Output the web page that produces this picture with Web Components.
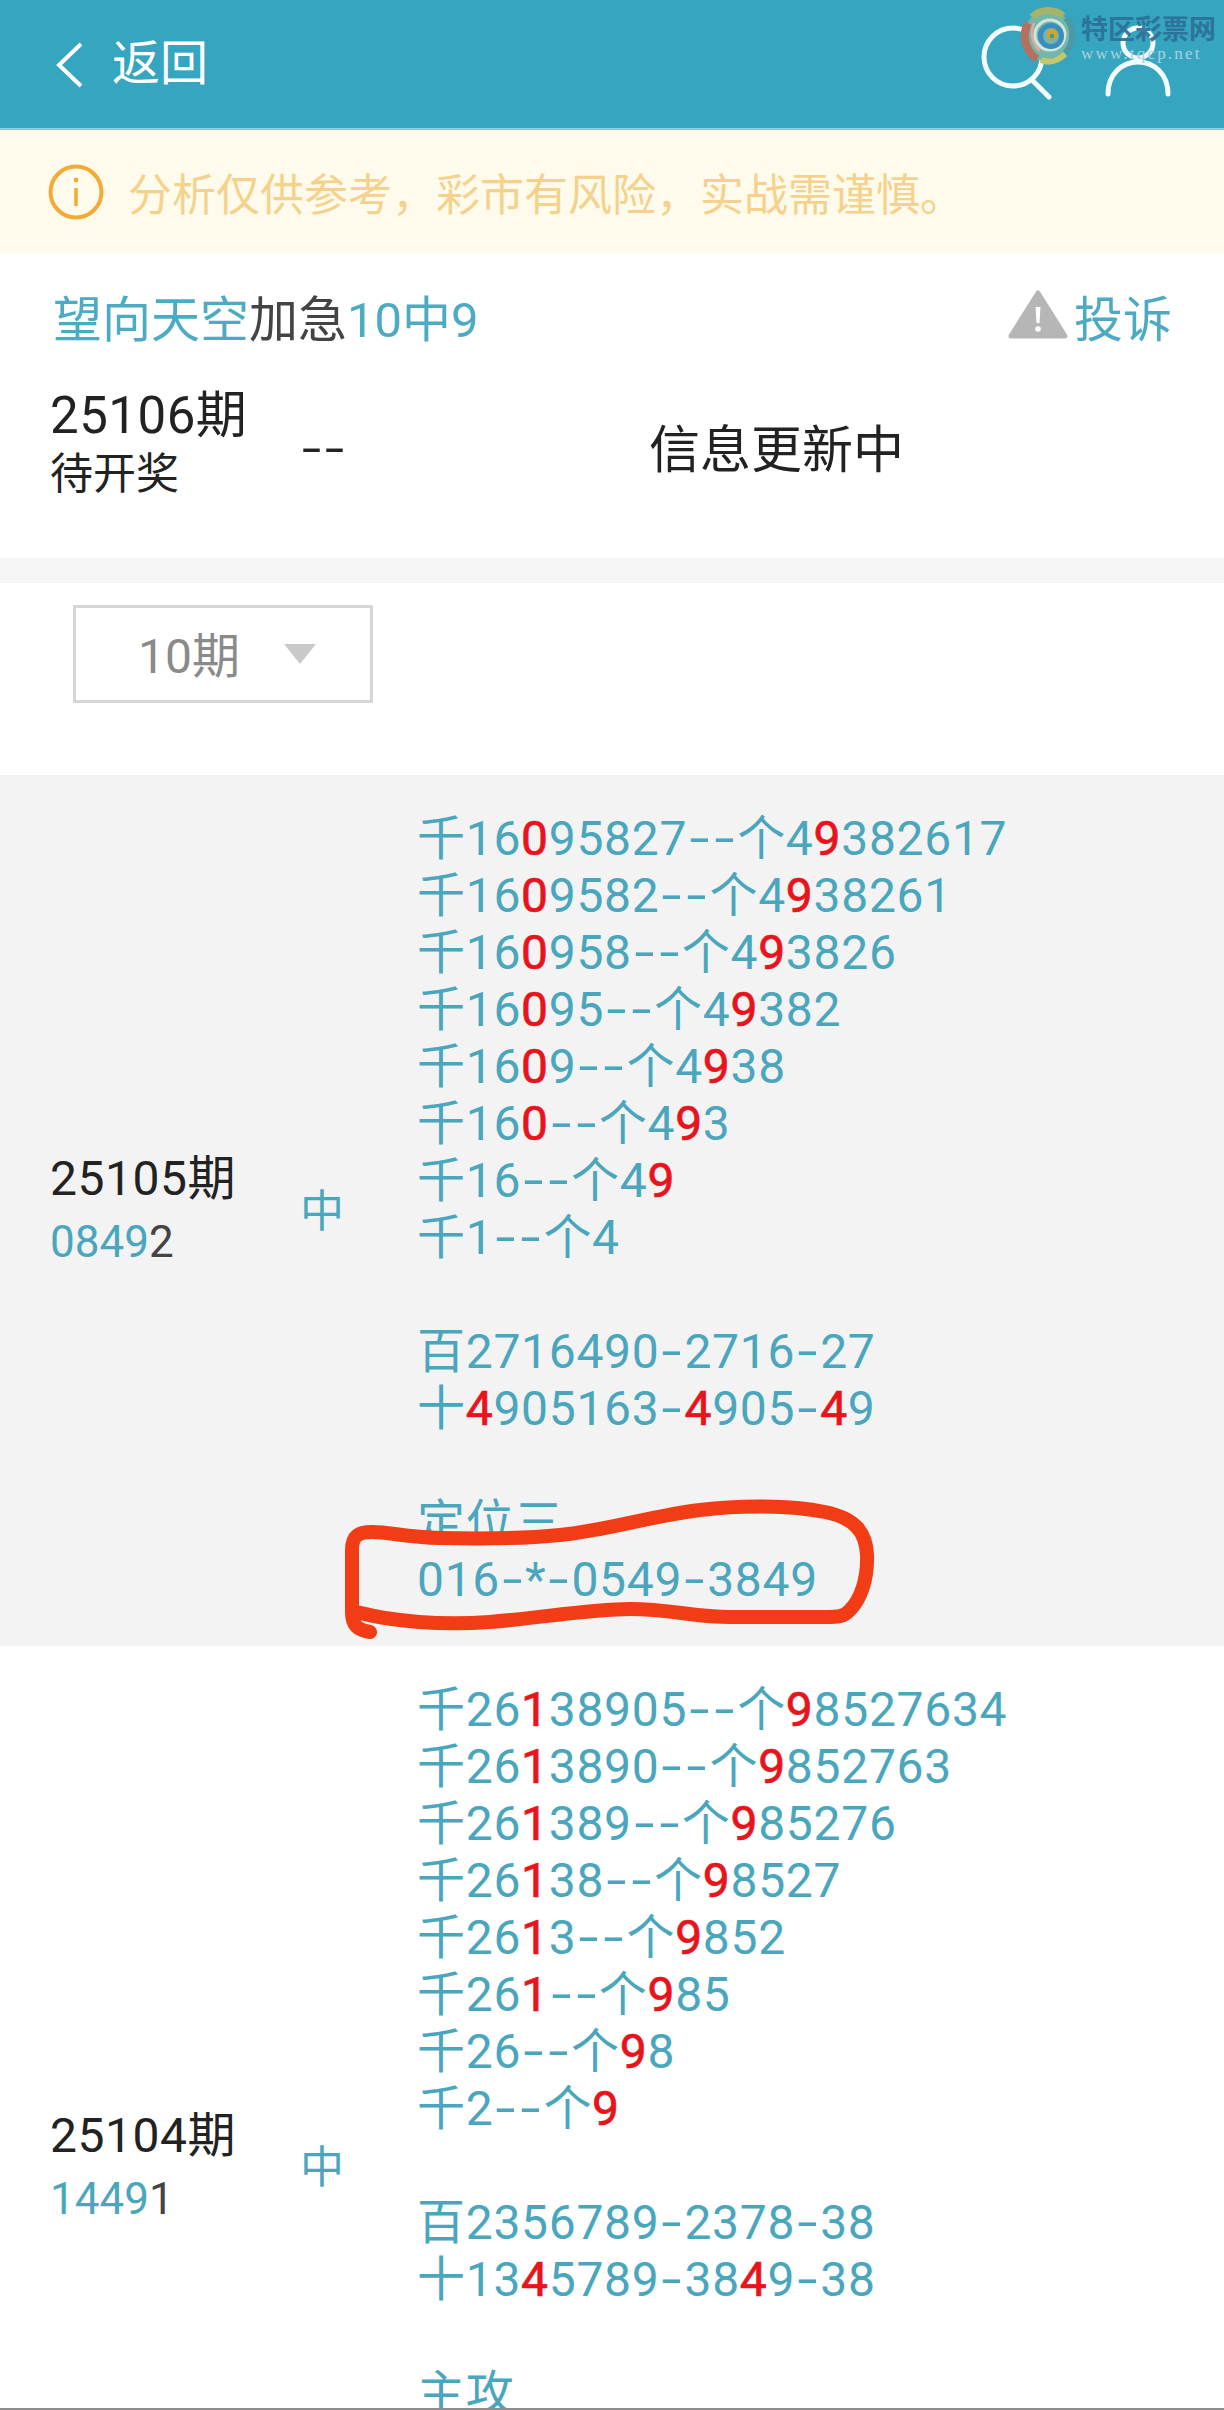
<!DOCTYPE html>
<html lang="zh">
<head>
<meta charset="utf-8">
<title>返回</title>
<style>
html, body { margin: 0; height: 2410px; overflow: hidden; background: #fff; }
body { font-family: Roboto, "Noto Sans CJK SC", sans-serif; color: #222; position: relative; }
</style>
</head>
<body>
<top-bar></top-bar>
<notice-bar>分析仅供参考，彩市有风险，实战需谨慎。</notice-bar>
<info-card></info-card>
<period-filter>10期</period-filter>

<result-row period="25105期" code="0849" tail="2" shade>
  <num-line text="千16[0]95827--个4[9]382617"></num-line>
  <num-line text="千16[0]9582--个4[9]38261"></num-line>
  <num-line text="千16[0]958--个4[9]3826"></num-line>
  <num-line text="千16[0]95--个4[9]382"></num-line>
  <num-line text="千16[0]9--个4[9]38"></num-line>
  <num-line text="千16[0]--个4[9]3"></num-line>
  <num-line text="千16--个4[9]"></num-line>
  <num-line text="千1--个4"></num-line>
  <num-line></num-line>
  <num-line text="百2716490-2716-27"></num-line>
  <num-line text="十[4]905163-[4]905-[4]9"></num-line>
  <num-line></num-line>
  <num-line text="定位三"></num-line>
  <num-line text="016-*-0549-3849"></num-line>
  <scribble-mark></scribble-mark>
</result-row>

<result-row period="25104期" code="1449" tail="1">
  <num-line text="千26[1]38905--个[9]8527634"></num-line>
  <num-line text="千26[1]3890--个[9]852763"></num-line>
  <num-line text="千26[1]389--个[9]85276"></num-line>
  <num-line text="千26[1]38--个[9]8527"></num-line>
  <num-line text="千26[1]3--个[9]852"></num-line>
  <num-line text="千26[1]--个[9]85"></num-line>
  <num-line text="千26--个[9]8"></num-line>
  <num-line text="千2--个[9]"></num-line>
  <num-line></num-line>
  <num-line text="百2356789-2378-38"></num-line>
  <num-line text="十13[4]5789-38[4]9-38"></num-line>
  <num-line></num-line>
  <num-line text="主攻"></num-line>
  <num-line></num-line>
  <num-line></num-line>
  <num-line></num-line>
  <num-line></num-line>
</result-row>

<bottom-edge></bottom-edge>

<script>
//Barra superior
class TopBar extends HTMLElement {
    connectedCallback() {
        const shadowRoot = this.attachShadow({ mode: 'open' });
        shadowRoot.innerHTML = `
            <style>
                :host {
                    display: flex;
                    align-items: center;
                    position: relative;
                    height: 128px;
                    border-bottom: 2px solid #8fcbd9;
                    background: #36a5c0;
                    color: #fff;
                }
                .back { margin: 2px 0 0 56px; display: block; }
                .title { margin-left: 28px; font-size: 48px; line-height: 60px; }
                .icons { margin-left: auto; margin: 0 52px 4px auto; display: flex; gap: 48px; align-items: center; }
                .icons svg { display: block; }
                .mark { position: absolute; left: 1021px; top: 6px; display: flex; gap: 6px; }
                .brand { margin-top: 9px; }
                .brand b { display: block; font-size: 27px; line-height: 30px; color: #2c7097; opacity: .92; white-space: nowrap; }
                .brand i {
                    display: block;
                    font: 17px/18px "Liberation Serif", serif;
                    letter-spacing: 2.2px;
                    color: #a9d2dc;
                    white-space: nowrap;
                }
            </style>
            <svg class="back" width="28" height="46" viewBox="0 0 28 46" fill="none" stroke="#fff" stroke-width="4">
                <path d="M25 2 3 23l22 21"/>
            </svg>
            <span class="title">返回</span>
            <div class="icons">
                <svg width="76" height="76" viewBox="0 0 76 76" fill="none" stroke="#f2fbfd" stroke-width="5" stroke-linecap="round">
                    <circle cx="33" cy="33" r="29"/>
                    <path d="M52 56 69 73"/>
                </svg>
                <svg width="68" height="76" viewBox="0 0 68 76" fill="none" stroke="#f2fbfd" stroke-width="5" stroke-linecap="round">
                    <circle cx="34" cy="19" r="15"/>
                    <path d="M4 70C4 50 18 38 34 38S64 50 64 70"/>
                </svg>
            </div>
            <div class="mark">
                <svg width="54" height="60" viewBox="0 0 54 60" fill="none">
                    <ellipse cx="27" cy="30" rx="24" ry="26" fill="#74b6aa"/>
                    <path d="M7 17C1 28 3 44 16 53" stroke="#b5705f" stroke-width="8"/>
                    <path d="M13 17C9 27 11 38 19 45" stroke="#e3a9a0" stroke-width="2.5"/>
                    <path d="M11 11C19 3 33 2 42 10" stroke="#a5b468" stroke-width="7"/>
                    <path d="M45 12C54 22 53 38 44 47" stroke="#4a9aa6" stroke-width="6"/>
                    <path d="M20 54C29 58 38 54 44 48" stroke="#c6c868" stroke-width="6"/>
                    <circle cx="29" cy="29" r="15" stroke="#cfe6d8" stroke-width="3"/>
                    <circle cx="30" cy="30" r="10.5" stroke="#3a8dc0" stroke-width="5"/>
                    <circle cx="31" cy="28" r="5.5" fill="#cfa436"/>
                    <circle cx="31" cy="30" r="2.2" fill="#3f9a86"/>
                </svg>
                <div class="brand">
                    <b>特区彩票网</b>
                    <i>www.tqcp.net</i>
                </div>
            </div>
        `;
    }
}
customElements.define("top-bar", TopBar);

//Aviso
class NoticeBar extends HTMLElement {
    connectedCallback() {
        const shadowRoot = this.attachShadow({ mode: 'open' });
        shadowRoot.innerHTML = `
            <style>
                :host {
                    display: flex;
                    align-items: center;
                    gap: 24px;
                    height: 123px;
                    padding: 0 0 0 48px;
                    background: #fffbec;
                    color: #f4d28c;
                    font-size: 44px;
                }
                svg { display: block; flex: none; }
            </style>
            <svg width="56" height="56" viewBox="0 0 56 56" fill="none" stroke="#f2ab35">
                <circle cx="28" cy="28" r="25.5" stroke-width="4"/>
                <circle cx="28" cy="16" r="2.4" fill="#f2ab35" stroke="none"/>
                <path d="M28 24V42" stroke-width="3.5"/>
            </svg>
            <span><slot></slot></span>
        `;
    }
}
customElements.define("notice-bar", NoticeBar);

//Tarjeta de informacion
class InfoCard extends HTMLElement {
    connectedCallback() {
        const shadowRoot = this.attachShadow({ mode: 'open' });
        shadowRoot.innerHTML = `
            <style>
                :host {
                    display: block;
                    box-sizing: border-box;
                    height: 330px;
                    padding: 37px 52px 0 53px;
                    border-bottom: 25px solid #f5f5f5;
                    background: #fff;
                }
                .head { display: flex; align-items: center; justify-content: space-between; height: 50px; font-size: 49px; }
                .teal { color: #4cabc2; }
                .dark { color: #444; }
                .report { display: flex; align-items: center; gap: 6px; }
                .report svg { display: block; }
                .draw { display: flex; align-items: center; margin: 46px 0 0 -3px; color: #222; }
                .when { width: 250px; }
                .when div:first-child { font-size: 51px; line-height: 60px; letter-spacing: .5px; }
                .when div:last-child { font-size: 43px; line-height: 56px; }
                .none { width: 349px; font-size: 46px; margin-top: 8px; }
                .none i { display: inline-block; width: 23px; text-align: center; font-style: normal; transform: scaleX(1.5); }
                .state { font-size: 51px; margin-top: 4px; }
            </style>
            <div class="head">
                <div><span class="teal">望向天空</span><span class="dark">加急</span><span class="teal">10中9</span></div>
                <div class="report teal">
                    <svg width="60" height="50" viewBox="0 0 60 50">
                        <path d="M30 3 57 46H3Z" fill="#b6b6b6" stroke="#b6b6b6" stroke-width="5" stroke-linejoin="round"/>
                        <path d="M27.5 17h5l-1 16h-3Z" fill="#fff"/>
                        <circle cx="30" cy="39" r="2.8" fill="#fff"/>
                    </svg>
                    <span>投诉</span>
                </div>
            </div>
            <div class="draw">
                <div class="when"><div>25106期</div><div>待开奖</div></div>
                <div class="none"><i>-</i><i>-</i></div>
                <div class="state">信息更新中</div>
            </div>
        `;
    }
}
customElements.define("info-card", InfoCard);

//Selector de periodos
class PeriodFilter extends HTMLElement {
    connectedCallback() {
        const shadowRoot = this.attachShadow({ mode: 'open' });
        shadowRoot.innerHTML = `
            <style>
                :host { display: block; height: 170px; padding: 22px 0 0 73px; background: #fff; }
                .box {
                    box-sizing: border-box;
                    display: flex;
                    align-items: center;
                    width: 300px;
                    height: 98px;
                    padding-left: 62px;
                    gap: 44px;
                    border: 3px solid #d6d6d6;
                    color: #8a8a8a;
                    font-size: 48px;
                }
                span { margin-top: -5px; }
                svg { display: block; }
            </style>
            <div class="box">
                <span><slot></slot></span>
                <svg width="32" height="20" viewBox="0 0 32 20"><path d="M0 0H32L16 20Z" fill="#c9c9c9"/></svg>
            </div>
        `;
    }
}
customElements.define("period-filter", PeriodFilter);

//Linea de numeros, [x] va en rojo
class NumLine extends HTMLElement {
    connectedCallback() {
        const shadowRoot = this.attachShadow({ mode: 'open' });
        const text = this.getAttribute('text') || '';
        const html = text
            .replace(/\[(.)\]/g, '<b>$1</b>')
            .replace(/-/g, '<i>-</i>');
        shadowRoot.innerHTML = `
            <style>
                :host {
                    display: block;
                    height: 57px;
                    font-size: 48px;
                    line-height: 57px;
                    letter-spacing: .7px;
                    color: #4aa6bd;
                    white-space: nowrap;
                }
                b { font-weight: 400; color: #e8141c; -webkit-text-stroke: .7px #e8141c; }
                i { display: inline-block; width: 25px; text-align: center; font-style: normal; letter-spacing: 0; transform: scaleX(1.5); }
            </style>
            ${html}
        `;
    }
}
customElements.define("num-line", NumLine);

//Fila de resultado
class ResultRow extends HTMLElement {
    connectedCallback() {
        const shadowRoot = this.attachShadow({ mode: 'open' });
        shadowRoot.innerHTML = `
            <style>
                :host {
                    display: flex;
                    position: relative;
                    align-items: center;
                    padding: 35px 0 38px 50px;
                    background: #fff;
                }
                :host([shade]) { background: #f3f3f4; }
                .when { width: 250px; flex: none; color: #222; }
                .when div:first-child { font-size: 48px; line-height: 66px; letter-spacing: .5px; }
                .when div:last-child { font-size: 44px; line-height: 60px; color: #4aa6bd; }
                .when span { color: #444; }
                .hit { width: 117px; flex: none; font-size: 44px; color: #4aa6bd; margin-top: -3px; }
                .lines { flex: 1; }
            </style>
            <div class="when">
                <div>${this.getAttribute('period')}</div>
                <div>${this.getAttribute('code')}<span>${this.getAttribute('tail')}</span></div>
            </div>
            <div class="hit">中</div>
            <div class="lines"><slot></slot></div>
        `;
    }
}
customElements.define("result-row", ResultRow);

//Marca roja a mano
class ScribbleMark extends HTMLElement {
    connectedCallback() {
        const shadowRoot = this.attachShadow({ mode: 'open' });
        shadowRoot.innerHTML = `
            <style>
                :host { position: absolute; left: 340px; top: 715px; width: 540px; height: 150px; pointer-events: none; }
                svg { display: block; }
            </style>
            <svg width="540" height="150" viewBox="340 1490 540 150" fill="none" stroke="#f23c16" stroke-width="14" stroke-linecap="round" stroke-linejoin="round">
                <path d="M370 1632C358 1630 352 1626 352 1612V1550C352 1536 358 1532 372 1532C390 1532 405 1537 440 1538C480 1539 520 1539 560 1535C610 1530 650 1516 700 1510C740 1505 790 1505 825 1512C855 1518 866 1532 867 1555C868 1580 860 1600 850 1610C844 1617 838 1617 825 1617H730C695 1617 670 1609 630 1609C590 1609 540 1618 490 1622C450 1625 410 1622 385 1618C370 1616 362 1613 356 1612"/>
            </svg>
        `;
    }
}
customElements.define("scribble-mark", ScribbleMark);

//Borde inferior de la captura
class BottomEdge extends HTMLElement {
    connectedCallback() {
        const shadowRoot = this.attachShadow({ mode: 'open' });
        shadowRoot.innerHTML = `
            <style>
                :host { position: absolute; left: 0; right: 0; top: 2408px; height: 2px; background: #8c8c8c; }
            </style>
        `;
    }
}
customElements.define("bottom-edge", BottomEdge);
</script>
</body>
</html>
